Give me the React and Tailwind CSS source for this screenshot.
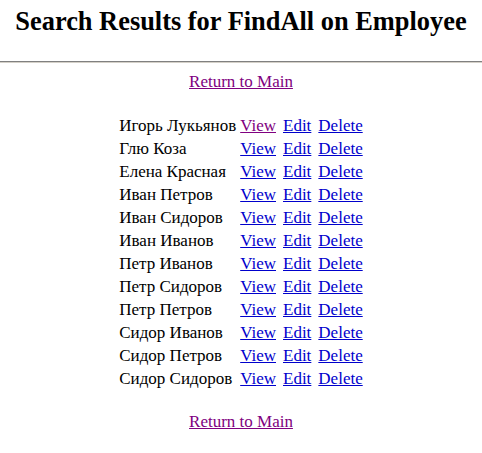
export default function App() {
  const names = [
    "Игорь Лукьянов",
    "Глю Коза",
    "Елена Красная",
    "Иван Петров",
    "Иван Сидоров",
    "Иван Иванов",
    "Петр Иванов",
    "Петр Сидоров",
    "Петр Петров",
    "Сидор Иванов",
    "Сидор Петров",
    "Сидор Сидоров",
  ];
  const font = { fontFamily: '"Liberation Serif", "Times New Roman", serif' };
  return (
    <div className="w-[482px] h-[453px] bg-white text-black overflow-hidden" style={font}>
      <h1 className="text-center font-bold text-[26.4px] leading-[30px] pt-[6px]">
        Search Results for FindAll on Employee
      </h1>
      <div className="mt-[25px] h-[2px] border-t border-t-[#808080] border-b border-b-[#d4d0c8]" />
      <div className="text-center mt-[9px] text-[17px] leading-[19px]">
        <a href="#" className="underline text-[#800080]">Return to Main</a>
      </div>
      <div className="flex justify-center mt-[23px]">
        <div className="grid grid-cols-[auto_auto] gap-x-[4px] text-[17px] leading-[19px]">
          {names.map((n, i) => (
            <div key={n} className="contents">
              <div className="h-[23px] flex items-center">{n}</div>
              <div className="h-[23px] flex items-center gap-[7px]">
                <a href="#" className={"underline " + (i === 0 ? "text-[#800080]" : "text-[#0000cc]")}>View</a>
                <a href="#" className="underline text-[#0000cc]">Edit</a>
                <a href="#" className="underline text-[#0000cc]">Delete</a>
              </div>
            </div>
          ))}
        </div>
      </div>
      <div className="text-center mt-[22px] text-[17px] leading-[19px]">
        <a href="#" className="underline text-[#800080]">Return to Main</a>
      </div>
    </div>
  );
}
